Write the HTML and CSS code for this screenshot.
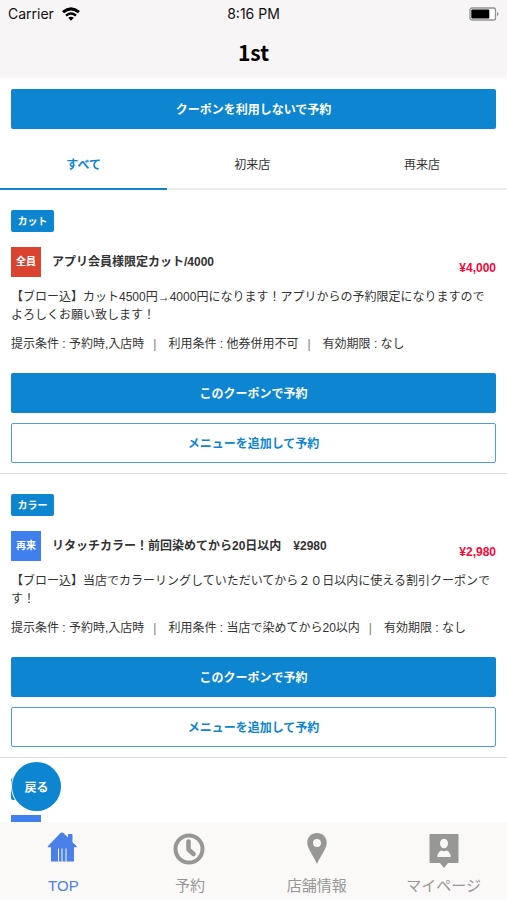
FILE: index.html
```html
<!DOCTYPE html>
<html lang="ja">
<head>
<meta charset="utf-8">
<meta name="viewport" content="width=device-width, initial-scale=1">
<title>1st</title>
<link rel="stylesheet" href="styles.css">
</head>
<body>
<div class="app">
  <header class="header">
    <div class="status">
      <div class="status-left">
        <span>Carrier</span>
        <svg class="wifi" viewBox="0 0 20 14" aria-hidden="true">
          <path d="M2 5.2Q10-1.4 18 5.2" fill="none" stroke="#000" stroke-width="3"/>
          <path d="M5 8.6Q10 4.6 15 8.6" fill="none" stroke="#000" stroke-width="2.4"/>
          <path d="M7.2 10.8Q10 8.6 12.8 10.8L10 13.8Z"/>
        </svg>
      </div>
      <span>8:16 PM</span>
      <div class="status-right">
        <svg class="battery" viewBox="0 0 30 14" aria-hidden="true">
          <rect x="1" y="1" width="25.5" height="12" rx="2" fill="#fff" stroke="#929292" stroke-width="1.3"/>
          <rect x="2.3" y="2.4" width="18" height="9.2" rx="1"/>
          <path d="M28 5v4q1.600-.6 1.600-2T28 5" fill="#929292"/>
        </svg>
      </div>
    </div>
    <h1 class="title">1st</h1>
  </header>

  <main class="content">
    <div class="skip">
      <button class="button" type="button">クーポンを利用しないで予約</button>
    </div>
    <div class="tabs" role="tablist">
      <button class="tab tab-active" type="button" role="tab" aria-selected="true">すべて</button>
      <button class="tab" type="button" role="tab" aria-selected="false">初来店</button>
      <button class="tab" type="button" role="tab" aria-selected="false">再来店</button>
    </div>

    <article class="coupon">
      <span class="tag">カット</span>
      <div class="summary">
        <span class="target target-all">全員</span>
        <h2 class="name">アプリ会員様限定カット/4000</h2>
        <span class="price">¥4,000</span>
      </div>
      <p class="description">【ブロー込】カット4500円→4000円になります！アプリからの予約限定になりますのでよろしくお願い致します！</p>
      <p class="terms"><span>提示条件 : 予約時,入店時</span><span class="bar">|</span><span>利用条件 : 他券併用不可</span><span class="bar">|</span><span>有効期限 : なし</span></p>
      <div class="actions">
        <button class="button" type="button">このクーポンで予約</button>
        <button class="button button-outline" type="button">メニューを追加して予約</button>
      </div>
    </article>

    <article class="coupon">
      <span class="tag">カラー</span>
      <div class="summary">
        <span class="target">再来</span>
        <h2 class="name">リタッチカラー！前回染めてから20日以内　¥2980</h2>
        <span class="price">¥2,980</span>
      </div>
      <p class="description">【ブロー込】当店でカラーリングしていただいてから２０日以内に使える割引クーポンです！</p>
      <p class="terms"><span>提示条件 : 予約時,入店時</span><span class="bar">|</span><span>利用条件 : 当店で染めてから20以内</span><span class="bar">|</span><span>有効期限 : なし</span></p>
      <div class="actions">
        <button class="button" type="button">このクーポンで予約</button>
        <button class="button button-outline" type="button">メニューを追加して予約</button>
      </div>
    </article>

    <article class="coupon">
      <span class="tag"></span>
      <div class="summary"><span class="target"></span></div>
    </article>

    <button class="back" type="button">戻る</button>
  </main>

  <nav class="nav">
    <a class="nav-item nav-active" href="#top">
      <svg class="nav-icon" viewBox="0 0 34 34" aria-hidden="true">
        <path fill="currentColor" d="M16 .6Q17 .6 18 1.500L22 5.500V3q0-1 1-1h2.500q1 0 1 1v7.200L30.500 14Q31.500 15.300 30 15.300H28V29.500H5V15.300H2.500Q1 15.300 2 14L14 1.500Q15 .6 16 .6Z"/>
        <path fill="#faf9f8" d="M12 16.500h1v13h-1zM15.500 16.500h1v13h-1zM19.500 16.500h1v13h-1z"/>
      </svg>
      <span>TOP</span>
    </a>
    <a class="nav-item" href="#reserve">
      <svg class="nav-icon" viewBox="0 0 34 34" aria-hidden="true">
        <circle cx="16" cy="17" r="13.500" fill="none" stroke="currentColor" stroke-width="4"/>
        <path d="M15.500 9.500V17.500l5 4.500" fill="none" stroke="currentColor" stroke-width="4.500" stroke-linecap="round" stroke-linejoin="round"/>
      </svg>
      <span>予約</span>
    </a>
    <a class="nav-item" href="#shop">
      <svg class="nav-icon" viewBox="0 0 36 36" aria-hidden="true">
        <path fill="currentColor" fill-rule="evenodd" d="M18 1C12 1 7.700 5.500 7.700 11c0 7 6.300 13 10.300 23 4-10 10.300-16 10.300-23 0-5.500-4.300-10-10.300-10Zm0 6.500a4.200 4.200 0 1 1 0 8.400 4.200 4.200 0 0 1 0-8.400Z"/>
      </svg>
      <span>店舗情報</span>
    </a>
    <a class="nav-item" href="#mypage">
      <svg class="nav-icon" viewBox="0 0 34 34" aria-hidden="true">
        <path fill="currentColor" d="M3.500 2h27q1 0 1 1v27q0 1-1 1H21l-4 5-4-5H3.500q-1 0-1-1V3q0-1 1-1Z"/>
        <ellipse cx="17" cy="11.500" rx="4" ry="4.800" fill="#faf9f8"/>
        <path fill="#faf9f8" d="M10.300 25q0-4.500 3.700-6.500q3 1.500 6 0q3.700 2 3.700 6.500Z"/>
      </svg>
      <span>マイページ</span>
    </a>
  </nav>
</div>
</body>
</html>
```

FILE: styles.css
```css
* {
  box-sizing: border-box;
}

body {
  margin: 0;
  background: #fff;
  color: #333;
  font: 12px/18px "Liberation Sans", "Noto Sans CJK JP", sans-serif;
}

button {
  margin: 0;
  padding: 0;
  border: 0;
  font: inherit;
  cursor: pointer;
}

h1,
h2,
p {
  margin: 0;
}

.app {
  display: flex;
  flex-direction: column;
  height: 100vh;
}

.header {
  padding: 4px 8px 11px;
  background: #f7f5f6;
  color: #111;
}

.status {
  display: grid;
  grid-template-columns: 1fr auto 1fr;
  align-items: center;
  font: 14px/20px Inter, sans-serif;
}

.status-left {
  display: flex;
  align-items: center;
  gap: 7px;
}

.status-right {
  display: flex;
  justify-content: flex-end;
}

.wifi {
  width: 20px;
  height: 14px;
}

.battery {
  width: 30px;
  height: 14px;
}

.title {
  padding-top: 13px;
  color: #000;
  font: bold 21px/30px "Noto Sans CJK JP", sans-serif;
  text-align: center;
}

.content {
  position: relative;
  flex: 1;
  min-height: 0;
  overflow: hidden;
}

.skip {
  padding: 11px 11px 0;
}

.button {
  display: block;
  width: 100%;
  height: 40px;
  padding-top: 2px;
  border-radius: 2px;
  background: #0d85d0;
  color: #fff;
  font-weight: bold;
}

.button-outline {
  border: 1px solid #4a9fdb;
  background: #fff;
  color: #0d85d0;
}

.tabs {
  display: grid;
  grid-template-columns: 33% 1fr 1fr;
  margin-top: 10px;
  box-shadow: inset 0 -2px #ececec;
}

.tab {
  height: 51px;
  padding-top: 2px;
  border-bottom: 2px solid transparent;
  background: none;
  color: #333;
}

.tab-active {
  border-color: #0d85d0;
  color: #0d85d0;
  font-weight: bold;
}

.coupon {
  padding: 20px 11px 10px;
  border-bottom: 1px solid #dcdfdf;
}

.tag {
  display: block;
  width: 43px;
  height: 22px;
  border-radius: 2px;
  background: #0d85d0;
  color: #fff;
  font-size: 10px;
  font-weight: bold;
  line-height: 23px;
  text-align: center;
}

.summary {
  display: flex;
  align-items: center;
  margin-top: 15px;
}

.target {
  width: 30px;
  height: 30px;
  background: #4080ee;
  color: #fff;
  font-size: 10px;
  font-weight: bold;
  line-height: 30px;
  text-align: center;
}

.target-all {
  background: #d9432f;
}

.name {
  flex: 1;
  margin-left: 11px;
  font-size: 12px;
  line-height: 20px;
}

.price {
  align-self: flex-end;
  color: #f5083c;
  font-weight: bold;
}

.description {
  margin-top: 11px;
}

.terms {
  display: flex;
  margin-top: 11px;
}

.bar {
  margin: 0 12px 0 9px;
  color: #777;
}

.actions {
  display: grid;
  gap: 10px;
  margin-top: 20px;
}

/* Floating back button over the list */
.back {
  position: absolute;
  bottom: 11px;
  left: 12px;
  width: 49px;
  height: 49px;
  padding-top: 2px;
  border-radius: 50%;
  background: #0d85d0;
  box-shadow: 0 0 0 1px #fff;
  color: #fff;
  font-weight: bold;
}

.nav {
  display: grid;
  grid-template-columns: repeat(4, 1fr);
  padding: 10px 0 3px;
  background: #faf9f8;
}

.nav-item {
  display: flex;
  flex-direction: column;
  align-items: center;
  gap: 9px;
  color: #979795;
  font: 15px/22px "Liberation Sans", "Noto Sans CJK JP", sans-serif;
  text-decoration: none;
}

.nav-icon {
  width: 34px;
  height: 34px;
  overflow: visible;
}

.nav-active {
  color: #4a80e8;
}
```
